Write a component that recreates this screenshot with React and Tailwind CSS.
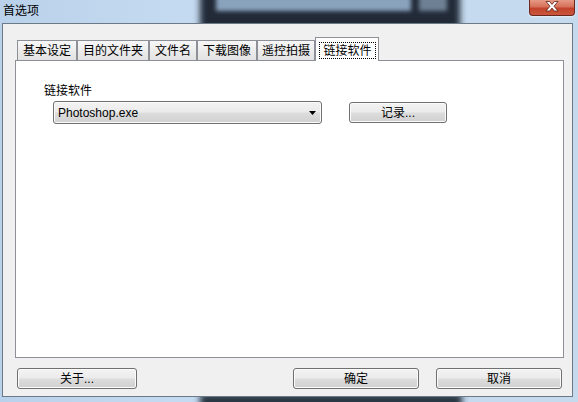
import React from "react";

const tabs = [
  { label: "基本设定", width: "w-[60px]" },
  { label: "目的文件夹", width: "w-[72px]" },
  { label: "文件名", width: "w-[48px]" },
  { label: "下载图像", width: "w-[60px]" },
  { label: "遥控拍摄", width: "w-[58px]" },
];

// Win7 style push button
const Button = ({ className = "", children }) => (
  <button
    className={`flex items-center justify-center rounded-[3px] border border-[#707070] bg-[linear-gradient(#f3f3f3_0%,#ebebeb_48%,#dddddd_52%,#d0d0d0_100%)] shadow-[inset_0_0_0_1px_#fbfbfb] text-[12px] leading-[16px] text-black ${className}`}
  >
    {children}
  </button>
);

// blurred desktop behind the glass frame
const GlassBackdrop = () => (
  <svg
    className="absolute inset-0"
    width="578"
    height="402"
    viewBox="0 0 578 402"
  >
    <defs>
      <filter id="blur3" x="-20%" y="-20%" width="140%" height="140%">
        <feGaussianBlur stdDeviation="3" />
      </filter>
      <filter id="blur2" x="-20%" y="-50%" width="140%" height="200%">
        <feGaussianBlur stdDeviation="2" />
      </filter>
      <linearGradient id="glass" x1="0" y1="0" x2="1" y2="0">
        <stop offset="0" stopColor="#b9d1ea" />
        <stop offset="0.3" stopColor="#c4daf0" />
        <stop offset="1" stopColor="#c6daee" />
      </linearGradient>
    </defs>
    <rect x="0" y="0" width="578" height="402" fill="url(#glass)" />
    <rect x="200" y="-20" width="260" height="50" fill="#222c37" filter="url(#blur3)" />
    <rect x="216" y="-20" width="195" height="31" fill="#8aa3bd" filter="url(#blur2)" />
    <rect x="419" y="-20" width="28" height="31" fill="#6e8194" filter="url(#blur2)" />
    <rect x="200" y="393" width="262" height="30" fill="#2c3845" filter="url(#blur3)" />
  </svg>
);

export default function App() {
  return (
    <div className="relative w-[578px] h-[402px] overflow-hidden font-['Liberation_Sans','Noto_Sans_CJK_SC',sans-serif] text-black">
      <GlassBackdrop />

      <div className="relative flex flex-col">
        {/* title bar */}
        <div className="flex items-start h-[23px]">
          <span className="pl-[3px] pt-[3px] text-[12px] leading-[16px]">首选项</span>
          <div className="ml-auto mr-[3px] w-[46px] h-[16px] flex justify-center rounded-b-[4px] border border-t-0 border-[#6b261b] bg-[linear-gradient(#e79a87_0%,#d6705a_45%,#c2432b_55%,#c9573d_100%)] shadow-[0_1px_2px_rgba(255,255,255,0.6)]">
            <svg width="14" height="11" viewBox="0 0 14 11" className="mt-[1px]">
              <path
                d="M1 0.5h3.6L7 3.4 9.4 0.5H13L9 5.2l4 4.8H9.4L7 7.1 4.6 10H1l4-4.8z"
                fill="#ffffff"
                stroke="#5a1f14"
                strokeWidth="0.8"
              />
            </svg>
          </div>
        </div>

        {/* dialog body */}
        <div className="ml-[2px] w-[571px] h-[374px] border border-[#6c7987] bg-[#f0f0f0] pl-[12px] pt-[13px]">
          {/* tab strip */}
          <div className="relative z-10 flex items-end h-[24px] pl-[2px]">
            {tabs.map((t) => (
              <div
                key={t.label}
                className={`${t.width} h-[20px] mb-px flex items-center justify-center border border-b-0 border-[#8e9097] bg-[linear-gradient(#f7f7f7,#e2e2e2)] text-[12px] leading-[16px]`}
              >
                {t.label}
              </div>
            ))}
            <div className="w-[64px] h-[24px] flex items-start justify-center border border-b-0 border-[#8e9097] bg-white">
              <span className="mt-[4px] h-[17px] w-[57px] ml-[1px] flex items-center justify-center border border-dotted border-black text-[12px] leading-[16px]">
                链接软件
              </span>
            </div>
          </div>

          {/* tab panel */}
          <div className="-mt-px w-[549px] h-[298px] border border-[#8e9097] bg-white pl-[28px] pt-[22px]">
            <div className="text-[12px] leading-[16px]">链接软件</div>
            <div className="flex items-start mt-[2px] ml-[9px]">
              <div className="w-[269px] h-[23px] flex items-center pl-[4px] pr-[5px] rounded-[3px] border border-[#707070] bg-[linear-gradient(#f3f3f3_0%,#ebebeb_48%,#dddddd_52%,#d0d0d0_100%)] shadow-[inset_0_0_0_1px_#fbfbfb]">
                <span className="text-[12px] leading-[16px]">Photoshop.exe</span>
                <svg width="7" height="4" viewBox="0 0 7 4" className="ml-auto">
                  <path d="M0 0h7L3.5 4z" fill="#000" />
                </svg>
              </div>
              <Button className="ml-[27px] mt-px w-[98px] h-[21px]">记录...</Button>
            </div>
          </div>

          {/* footer buttons */}
          <div className="flex mt-[10px]">
            <Button className="ml-[2px] w-[120px] h-[21px]">关于...</Button>
            <Button className="ml-[156px] w-[126px] h-[21px]">确定</Button>
            <Button className="ml-[17px] w-[126px] h-[21px]">取消</Button>
          </div>
        </div>
      </div>
    </div>
  );
}
